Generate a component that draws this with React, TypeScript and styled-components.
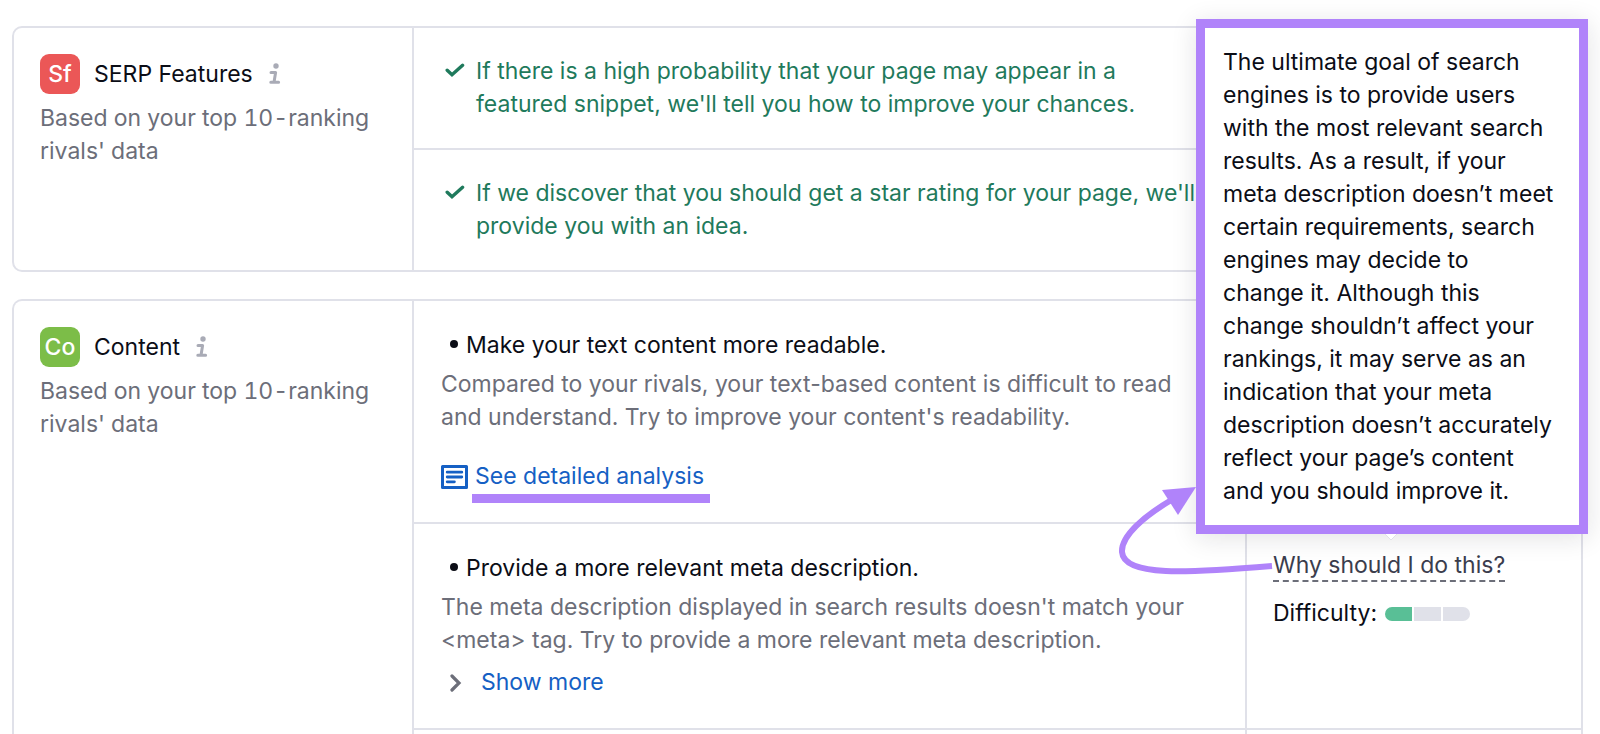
import React from "react";
import styled, { createGlobalStyle } from "styled-components";

const color = {
  line: "#e0e1e9",
  text: "#0b0d16",
  muted: "#6c6e79",
  green: "#1f7a5c",
  link: "#1560c4",
  icon: "#a9abb6",
  accent: "#b083fa",
};

const GlobalStyle = createGlobalStyle`
  *, *::before, *::after { box-sizing: border-box; }
  body {
    margin: 0;
    background: #fff;
    color: ${color.text};
    font: 400 23px/33px Inter, "Liberation Sans", sans-serif;
  }
  h2, h3, p { margin: 0; padding: 0; font: inherit; }
`;

const Page = styled.main`
  display: flex;
  flex-direction: column;
  gap: 27px;
  min-height: 100vh;
  padding: 26px 17px 0 12px;
  overflow: hidden;
`;

const Card = styled.section<{ $open?: boolean }>`
  display: grid;
  grid-template-columns: 398px minmax(0, 1fr);
  flex: ${(p) => (p.$open ? "1 0 auto" : "none")};
  border: 2px solid ${color.line};
  border-radius: ${(p) => (p.$open ? "10px 10px 0 0" : "10px")};
  border-bottom-width: ${(p) => (p.$open ? "0" : "2px")};
`;

const Summary = styled.header`
  padding: 26px;
`;

const Heading = styled.div`
  display: flex;
  align-items: center;
  margin-bottom: 8px;
`;

const Badge = styled.span<{ $bg: string }>`
  display: grid;
  place-items: center;
  width: 40px;
  height: 40px;
  margin-right: 14px;
  border-radius: 9px;
  background: ${(p) => p.$bg};
  color: #fff;
  font-weight: 500;
`;

const InfoButton = styled.button`
  display: flex;
  margin-left: 16px;
  padding: 0;
  border: 0;
  background: none;
  color: ${color.icon};
`;

const Muted = styled.p<{ $tabular?: boolean }>`
  color: ${color.muted};
  font-variant-numeric: ${(p) => (p.$tabular ? "tabular-nums" : "normal")};
`;

const Rows = styled.div`
  display: flex;
  flex-direction: column;
  border-left: 2px solid ${color.line};
`;

const Row = styled.div`
  display: grid;
  grid-template-columns: minmax(0, 1fr) 336px;
  & + & { border-top: 2px solid ${color.line}; }
  &:last-child { flex: 1; }
`;

const Done = styled.p`
  display: flex;
  gap: 11px;
  padding: 27px 40px 27px 27px;
  color: ${color.green};
  svg { flex: none; margin: 6px 0 0 4px; }
`;

const Idea = styled.div`
  padding: 28px 30px 29px 27px;
`;

const IdeaTitle = styled.h3`
  display: flex;
  align-items: center;
  gap: 8px;
  margin-bottom: 6px;
  padding-left: 9px;
  &::before {
    content: "";
    width: 8px;
    height: 8px;
    margin-bottom: 4px;
    border-radius: 50%;
    background: currentColor;
  }
`;

const AnalysisLine = styled.div`
  display: flex;
  align-items: center;
  gap: 7px;
  margin-top: 26px;
  color: ${color.link};
`;

const AnalysisLink = styled.a`
  position: relative;
  color: inherit;
  text-decoration: none;
  &::after {
    content: "";
    position: absolute;
    top: 34px;
    left: -3px;
    right: -6px;
    height: 9px;
    background: ${color.accent};
  }
`;

const MoreButton = styled.button`
  display: flex;
  align-items: center;
  gap: 18px;
  margin-top: 9px;
  padding: 0 0 0 8px;
  border: 0;
  background: none;
  color: ${color.link};
  font: inherit;
`;

const Aside = styled.aside`
  position: relative;
  border-left: 2px solid ${color.line};
`;

const Reason = styled.div`
  display: flex;
  flex-direction: column;
  align-items: flex-start;
  gap: 15px;
  padding: 27px 26px;
`;

const WhyButton = styled.button`
  padding: 0;
  border: 0;
  border-bottom: 2px dashed #6c6e79;
  background: none;
  color: #3b3d4d;
  font: inherit;
  line-height: 29px;
`;

const Difficulty = styled.div`
  display: flex;
  align-items: center;
  gap: 8px;
`;

const Meter = styled.span`
  display: flex;
  gap: 2px;
  border-radius: 7px;
  overflow: hidden;
`;

const Segment = styled.span<{ $on?: boolean }>`
  width: 27px;
  height: 14px;
  background: ${(p) => (p.$on ? "#59bf96" : color.line)};
`;

const Tooltip = styled.div`
  position: absolute;
  right: -7px;
  bottom: calc(100% - 10px);
  z-index: 1;
  width: 392px;
  padding: 18px 24px 17px 18px;
  border: 9px solid ${color.accent};
  background: #fff;
  color: ${color.text};
  box-shadow: 0 4px 24px rgba(25, 27, 35, 0.12);
`;

const TooltipTip = styled.svg`
  position: absolute;
  top: calc(100% + 9px);
  left: 180px;
`;

const Pointer = styled.svg`
  position: absolute;
  top: -39px;
  left: -130px;
  z-index: 2;
  pointer-events: none;
`;

const InfoIcon = () => (
  <svg width="12" height="22" viewBox="0 0 12 22" fill="none" aria-hidden="true">
    <circle cx="7" cy="3" r="2.7" fill="currentColor" />
    <path d="M2 9.5H6.6L5 19.2M1.8 19.2H9.6" stroke="currentColor" strokeWidth="3" strokeLinecap="round" strokeLinejoin="round" />
  </svg>
);

const CheckIcon = () => (
  <svg width="20" height="18" viewBox="0 0 20 18" fill="none" aria-hidden="true">
    <path d="M2.2 9.2L7 13.8L17.6 4.3" stroke="currentColor" strokeWidth="3.4" strokeLinecap="round" />
  </svg>
);

const ReportIcon = () => (
  <svg width="27" height="24" viewBox="0 0 27 24" fill="none" aria-hidden="true">
    <path d="M1.5 1.5H25.5V22.5H1.5Z" stroke="currentColor" strokeWidth="3" strokeLinejoin="round" />
    <path d="M6.2 7.2H20.8M6.2 12H20.8M6.2 16.8H13.4" stroke="currentColor" strokeWidth="2.8" strokeLinecap="round" />
  </svg>
);

const ChevronIcon = () => (
  <svg width="14" height="18" viewBox="0 0 14 18" fill="none" aria-hidden="true">
    <path d="M3 2L10 9L3 16" stroke={color.muted} strokeWidth="3.2" strokeLinecap="round" />
  </svg>
);

function CardSummary({ code, bg, title }: { code: string; bg: string; title: string }) {
  return (
    <Summary>
      <Heading>
        <Badge $bg={bg}>{code}</Badge>
        <h2>{title}</h2>
        <InfoButton type="button" aria-label={`About ${title}`}>
          <InfoIcon />
        </InfoButton>
      </Heading>
      <Muted $tabular>Based on your top 10-ranking rivals' data</Muted>
    </Summary>
  );
}

export default function App() {
  return (
    <>
      <GlobalStyle />
      <Page>
        <Card>
          <CardSummary code="Sf" bg="#eb5757" title="SERP Features" />
          <Rows>
            <Row>
              <Done>
                <CheckIcon />
                <span>
                  If there is a high probability that your page may appear in a featured snippet, we'll tell you how to
                  improve your chances.
                </span>
              </Done>
            </Row>
            <Row>
              <Done>
                <CheckIcon />
                <span>If we discover that you should get a star rating for your page, we'll provide you with an idea.</span>
              </Done>
            </Row>
          </Rows>
        </Card>

        <Card $open>
          <CardSummary code="Co" bg="#7cbd48" title="Content" />
          <Rows>
            <Row>
              <Idea>
                <IdeaTitle>Make your text content more readable.</IdeaTitle>
                <Muted>
                  Compared to your rivals, your text-based content is difficult to read and understand. Try to improve
                  your content's readability.
                </Muted>
                <AnalysisLine>
                  <ReportIcon />
                  <AnalysisLink href="#analysis">See detailed analysis</AnalysisLink>
                </AnalysisLine>
              </Idea>
              <Aside />
            </Row>
            <Row>
              <Idea>
                <IdeaTitle>Provide a more relevant meta description.</IdeaTitle>
                <Muted>
                  The meta description displayed in search results doesn't match your &lt;meta&gt; tag. Try to provide a
                  more relevant meta description.
                </Muted>
                <MoreButton type="button">
                  <ChevronIcon />
                  Show more
                </MoreButton>
              </Idea>
              <Aside>
                <Reason>
                  <WhyButton type="button" aria-describedby="why-tip">
                    Why should I do this?
                  </WhyButton>
                  <Difficulty>
                    Difficulty:
                    <Meter role="img" aria-label="1 of 3">
                      <Segment $on />
                      <Segment />
                      <Segment />
                    </Meter>
                  </Difficulty>
                </Reason>
                <Tooltip id="why-tip" role="tooltip">
                  The ultimate goal of search engines is to provide users with the most relevant search results. As a
                  result, if your meta description doesn’t meet certain requirements, search engines may decide to
                  change it. Although this change shouldn’t affect your rankings, it may serve as an indication that
                  your meta description doesn’t accurately reflect your page’s content and you should improve it.
                  <TooltipTip width="12" height="7" viewBox="0 0 12 7" fill="none" aria-hidden="true">
                    <path d="M0 0L6 6L12 0" fill="#fff" stroke={color.line} />
                  </TooltipTip>
                </Tooltip>
                <Pointer width="160" height="100" viewBox="0 0 160 100" fill="none" aria-hidden="true">
                  <path d="M155 81C70 88 7 92 5 67C4 51 27 31 56 14" stroke={color.accent} strokeWidth="6" />
                  <path d="M79 2L45 5L61 30Z" fill={color.accent} />
                </Pointer>
              </Aside>
            </Row>
            <Row>
              <div />
              <Aside />
            </Row>
          </Rows>
        </Card>
      </Page>
    </>
  );
}
